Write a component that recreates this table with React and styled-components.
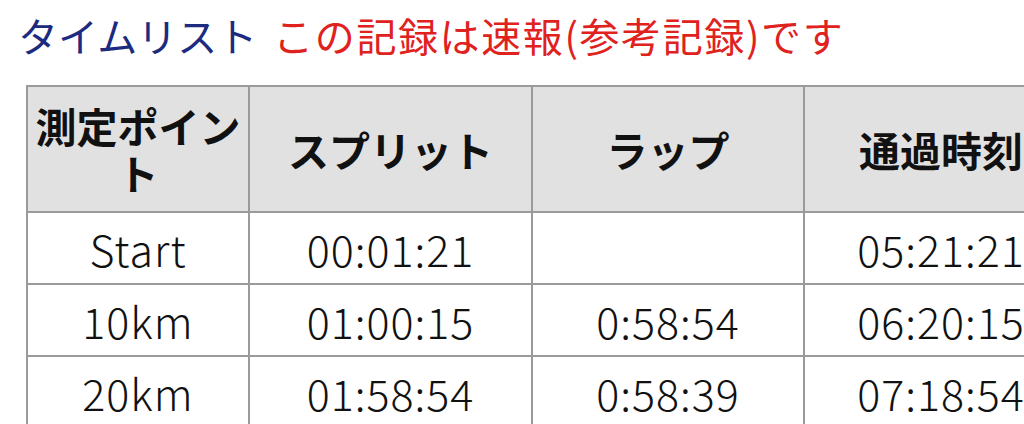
import React from 'react'
import styled, { createGlobalStyle } from 'styled-components'

const GlobalStyle = createGlobalStyle`
  html, body {
    margin: 0;
    padding: 0;
    background: #fff;
    overflow: hidden;
  }
  body {
    font-family: "Noto Sans CJK JP", "Noto Sans", sans-serif;
  }
`

const Page = styled.div`
  padding: 10px 0 0 18px;
  width: 1100px;
`

const Title = styled.h2`
  margin: 0;
  font-size: 40px;
  font-weight: 400;
  line-height: 50px;
  white-space: nowrap;
  color: #1c2a80;
`

const Notice = styled.span`
  color: #e0221e;
  margin-left: 16px;
  letter-spacing: 1.6px;
`

const Table = styled.table`
  margin: 25px 0 0 8px;
  border-collapse: collapse;
  table-layout: fixed;
  width: 1051px;
  border: 2px solid #9a9a9a;
`

const Th = styled.th`
  background: #e1e1e1;
  border: 2px solid #9a9a9a;
  height: 124px;
  padding: 0 4px;
  font-size: 41px;
  font-weight: 700;
  line-height: 47px;
  color: #111;
  text-align: center;
`

const Td = styled.td`
  border: 2px solid #9a9a9a;
  height: 70px;
  padding: 0 4px;
  font-size: 43px;
  font-weight: 300;
  letter-spacing: 1px;
  line-height: 50px;
  color: #111;
  text-align: center;
  white-space: nowrap;
`

const columns = [
  { label: '測定ポイント', width: 222 },
  { label: 'スプリット', width: 283 },
  { label: 'ラップ', width: 272 },
  { label: '通過時刻', width: 274 }
]

const rows = [
  ['Start', '00:01:21', '', '05:21:21'],
  ['10km', '01:00:15', '0:58:54', '06:20:15'],
  ['20km', '01:58:54', '0:58:39', '07:18:54']
]

export default function App() {
  return (
    <Page>
      <GlobalStyle />
      <Title>
        タイムリスト<Notice>この記録は速報(参考記録)です</Notice>
      </Title>
      <Table>
        <colgroup>
          {columns.map(c => (
            <col key={c.label} style={{ width: `${c.width}px` }} />
          ))}
        </colgroup>
        <thead>
          <tr>
            {columns.map(c => (
              <Th key={c.label}>{c.label}</Th>
            ))}
          </tr>
        </thead>
        <tbody>
          {rows.map(r => (
            <tr key={r[0]}>
              {r.map((v, i) => (
                <Td key={i}>{v}</Td>
              ))}
            </tr>
          ))}
        </tbody>
      </Table>
    </Page>
  )
}
